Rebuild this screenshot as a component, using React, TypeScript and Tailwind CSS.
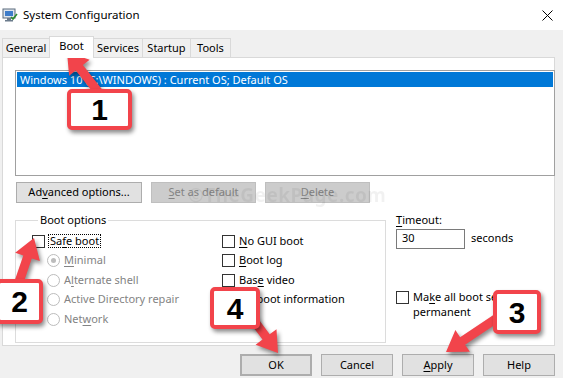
import React from "react";

const font = { fontFamily: '"Noto Sans", "Open Sans", sans-serif' };

const U = ({ children }: { children: React.ReactNode }) => <span className="underline underline-offset-2">{children}</span>;

const Box = () => <span className="w-[13px] h-[13px] border border-[#333] bg-white shrink-0" />;

const Radio = ({ on }: { on?: boolean }) => (
  <span className="w-[13px] h-[13px] rounded-full border border-[#bcbcbc] bg-white shrink-0 flex items-center justify-center">
    {on && <span className="w-[5px] h-[5px] rounded-full bg-[#bcbcbc]" />}
  </span>
);

const Btn = ({ children, disabled, focus, className = "" }: { children: React.ReactNode; disabled?: boolean; focus?: boolean; className?: string }) => (
  <div
    className={`h-[21px] flex items-center justify-center border ${
      disabled ? "bg-[#cccccc] border-[#bfbfbf] text-[#838383]" : "bg-[#e1e1e1] border-[#adadad] text-black"
    } ${focus ? "border-2 border-[#0078d7]" : ""} ${className}`}
  >
    {children}
  </div>
);

function arrow(tx: number, ty: number, hx: number, hy: number) {
  const dx = hx - tx, dy = hy - ty;
  const len = Math.hypot(dx, dy);
  const ux = dx / len, uy = dy / len;
  const px = -uy, py = ux;
  const sw = 4.5, hw = 13, hl = 20;
  const bx = hx - ux * hl, by = hy - uy * hl;
  const pts = [
    [tx + px * sw, ty + py * sw],
    [bx + px * sw, by + py * sw],
    [bx + px * hw, by + py * hw],
    [hx, hy],
    [bx - px * hw, by - py * hw],
    [bx - px * sw, by - py * sw],
    [tx - px * sw, ty - py * sw],
  ];
  return pts.map((p) => p.map((n) => n.toFixed(1)).join(",")).join(" ");
}

const Callout = ({ n, className }: { n: string; className: string }) => (
  <div
    className={`absolute bg-white border-[4px] border-[#f2444b] rounded-[5px] shadow-[2px_3px_4px_rgba(0,0,0,0.45)] flex items-center justify-center text-[30px] font-bold text-black ${className}`}
    style={{ fontFamily: '"Liberation Sans", Arial, sans-serif' }}
  >
    {n}
  </div>
);

const Tab = ({ children, w }: { children: React.ReactNode; w: string }) => (
  <div className={`h-[19px] border border-b-0 border-l-0 border-[#d9d9d9] bg-[#f0f0f0] flex items-center justify-center ${w}`}>{children}</div>
);

export default function App() {
  return (
    <div className="relative w-[563px] h-[378px] bg-[#f0f0f0] overflow-hidden text-[11px] text-black" style={font}>
      {/* title bar */}
      <div className="h-[30px] bg-white flex items-center pl-[2px] pr-[10px]">
        <svg width="16" height="16" viewBox="0 0 16 16" className="mr-[5px]">
          <rect x="1" y="2" width="12" height="9" fill="#dfe6ee" stroke="#5b6b7d" />
          <rect x="3" y="4" width="8" height="5" fill="#3d7cc9" />
          <rect x="5" y="11" width="4" height="2" fill="#6b7b8c" />
          <rect x="3" y="13" width="8" height="1.5" fill="#6b7b8c" />
          <path d="M9 10 l2 2 l4 -5" stroke="#2d8a2d" strokeWidth="1.6" fill="none" />
        </svg>
        <span className="text-[11.5px]">System Configuration</span>
        <svg width="11" height="11" viewBox="0 0 11 11" className="ml-auto">
          <path d="M0.5 0.5 L10.5 10.5 M10.5 0.5 L0.5 10.5" stroke="#000" strokeWidth="1" />
        </svg>
      </div>

      {/* tabs */}
      <div className="flex items-end pl-[2px] mt-[6px] h-[21px]">
        <div className="h-[19px] w-[48px] border border-b-0 border-[#d9d9d9] bg-[#f0f0f0] flex items-center justify-center">General</div>
        <div className="h-[22px] w-[45px] border border-b-0 border-[#d9d9d9] bg-white flex items-start justify-center pt-[1px] -mb-px -ml-px relative z-10">
          Boot
        </div>
        <Tab w="w-[49px]">Services</Tab>
        <Tab w="w-[48px]">Startup</Tab>
        <Tab w="w-[40px]">Tools</Tab>
      </div>

      {/* panel */}
      <div className="ml-[2px] w-[553px] h-[289px] bg-white border border-[#d9d9d9] pl-[12px] pt-[12px]">
        <div className="w-[540px] h-[106px] border border-[#a0a0a0] p-px">
          <div className="h-[15px] bg-[#0078d7] text-white flex items-center pl-[3px] leading-none">
            Windows 10 (C:\WINDOWS) : Current OS; Default OS
          </div>
        </div>

        <div className="relative flex mt-[6px] ml-px">
          <Btn className="w-[126px]">
            Ad<U>v</U>anced options...
          </Btn>
          <Btn disabled className="w-[105px] ml-[9px]">
            <U>S</U>et as default
          </Btn>
          <Btn disabled className="w-[105px] ml-[9px]">
            <U>D</U>elete
          </Btn>
          <span className="absolute left-[172px] top-[-1px] text-[19px] font-bold text-[#000] opacity-[0.05] tracking-wide">
            ©TheGeekPage.com
          </span>
        </div>

        <div className="flex mt-[10px]">
          <fieldset className="w-[371px] h-[130px] border border-[#dcdcdc] pl-[16px]">
            <legend className="ml-[6px] px-[2px] leading-[14px]">Boot options</legend>
            <div className="flex mt-[7px]">
              <div className="w-[190px] flex flex-col gap-[5.5px]">
                <div className="flex items-center gap-[3px] h-[14px]">
                  <Box />
                  <span className="border border-dotted border-black px-px leading-[12px]">
                    Sa<U>f</U>e boot
                  </span>
                </div>
                <div className="pl-[15px] flex flex-col gap-[5.5px] text-[#838383]">
                  <div className="flex items-center gap-[4px] h-[14px]">
                    <Radio on />
                    <span><U>M</U>inimal</span>
                  </div>
                  <div className="flex items-center gap-[4px] h-[14px]">
                    <Radio />
                    <span>A<U>l</U>ternate shell</span>
                  </div>
                  <div className="flex items-center gap-[4px] h-[14px]">
                    <Radio />
                    <span>Active Directory repair</span>
                  </div>
                  <div className="flex items-center gap-[4px] h-[14px]">
                    <Radio />
                    <span>Net<U>w</U>ork</span>
                  </div>
                </div>
              </div>
              <div className="flex flex-col gap-[5.5px]">
                <div className="flex items-center gap-[4px] h-[14px]">
                  <Box />
                  <span><U>N</U>o GUI boot</span>
                </div>
                <div className="flex items-center gap-[4px] h-[14px]">
                  <Box />
                  <span><U>B</U>oot log</span>
                </div>
                <div className="flex items-center gap-[4px] h-[14px]">
                  <Box />
                  <span>Bas<U>e</U> video</span>
                </div>
                <div className="flex items-center gap-[4px] h-[14px]">
                  <Box />
                  <span><U>O</U>S boot information</span>
                </div>
              </div>
            </div>
          </fieldset>

          <div className="ml-[10px] flex flex-col">
            <span className="-mt-[1px]"><U>T</U>imeout:</span>
            <div className="flex items-center mt-[0px]">
              <div className="w-[69px] h-[20px] border border-[#7a7a7a] flex items-center pl-[5px]">30</div>
              <span className="ml-[6px]">seconds</span>
            </div>
            <div className="flex items-start gap-[4px] mt-[42px]">
              <Box />
              <span className="leading-[15px] -mt-[2px]">
                Ma<U>k</U>e all boot settings
                <br />
                permanent
              </span>
            </div>
          </div>
        </div>
      </div>

      {/* bottom buttons */}
      <div className="flex justify-end pr-[8px] mt-[8px] gap-[9px]">
        <Btn focus className="w-[72px] h-[22px]">OK</Btn>
        <Btn className="w-[72px] h-[22px]">Cancel</Btn>
        <Btn className="w-[72px] h-[22px]"><U>A</U>pply</Btn>
        <Btn className="w-[72px] h-[22px]">Help</Btn>
      </div>

      {/* annotations */}
      <svg className="absolute inset-0 pointer-events-none drop-shadow-[2px_3px_2px_rgba(0,0,0,0.45)]" width="563" height="378">
        <polygon points={arrow(100, 94, 67, 52)} fill="#f2444b" />
        <polygon points={arrow(18, 285, 34, 238)} fill="#f2444b" />
        <polygon points={arrow(500, 316, 446, 352)} fill="#f2444b" />
        <polygon points={arrow(252, 318, 278, 353)} fill="#f2444b" />
      </svg>
      <Callout n="1" className="left-[67px] top-[89px] w-[65px] h-[41px]" />
      <Callout n="2" className="left-[-4px] top-[279px] w-[47px] h-[45px]" />
      <Callout n="3" className="left-[493px] top-[290px] w-[48px] h-[44px]" />
      <Callout n="4" className="left-[210px] top-[287px] w-[50px] h-[42px]" />
    </div>
  );
}
